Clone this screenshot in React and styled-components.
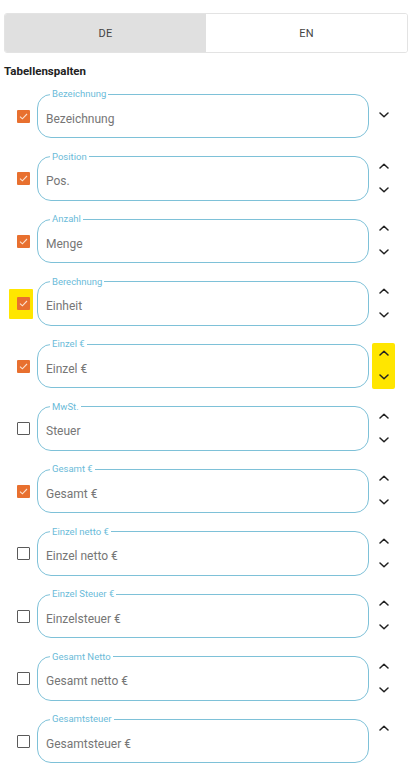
import React from "react";
import styled, { createGlobalStyle } from "styled-components";

const Global = createGlobalStyle`
  html, body { margin: 0; padding: 0; background: #fff; }
  body { font-family: Roboto, "Noto Sans", Arial, sans-serif; }
`;

const Page = styled.div`
  width: 414px;
  padding: 13px 6px 0 4px;
  box-sizing: border-box;
`;

const Toggle = styled.div`
  display: grid;
  grid-template-columns: 1fr 1fr;
  height: 40px;
  border: 1px solid #e3e3e3;
  border-radius: 3px;
  overflow: hidden;
  box-sizing: border-box;
`;

const ToggleBtn = styled.button`
  border: none;
  margin: 0;
  background: ${(p) => (p.$active ? "#e0e0e0" : "#fff")};
  font-family: Roboto, Arial, sans-serif;
  font-size: 11px;
  font-weight: 400;
  color: #444;
  letter-spacing: 0.2px;
  padding: 0;
`;

const Heading = styled.div`
  font-size: 11.5px;
  font-weight: 700;
  color: #222;
  margin: 11px 0 0 0;
  line-height: 14px;
`;

const List = styled.div`
  display: flex;
  flex-direction: column;
  gap: 13.5px;
  margin-top: 11px;
`;

const Row = styled.div`
  display: grid;
  grid-template-columns: 33px 332px 1fr;
  align-items: end;
  height: 49px;
`;

const CheckCell = styled.div`
  display: flex;
  align-items: center;
  justify-content: center;
  height: 44px;
  padding-left: 5px;
  box-sizing: border-box;
`;

const Highlight = styled.div`
  display: flex;
  align-items: center;
  justify-content: center;
  background: ${(p) => (p.$on ? "#ffe600" : "transparent")};
  width: ${(p) => p.$w}px;
  height: ${(p) => p.$h}px;
  margin-left: ${(p) => (p.$on ? "-4px" : "0")};
  padding-left: ${(p) => (p.$on ? "4px" : "0")};
  box-sizing: content-box;
  border-radius: ${(p) => (p.$on ? "1px" : "0")};
`;

const Box = styled.span`
  width: 13px;
  height: 13px;
  box-sizing: border-box;
  border-radius: 1px;
  display: flex;
  align-items: center;
  justify-content: center;
  background: ${(p) => (p.$checked ? "#e8702f" : "#fff")};
  border: ${(p) => (p.$checked ? "none" : "1px solid #5a5a5a")};
`;

const Field = styled.fieldset`
  margin: 0;
  height: 49px;
  box-sizing: border-box;
  border: 1px solid #7ec1d8;
  border-radius: 14px;
  padding: 0 9px 0 8px;
  display: flex;
  align-items: center;
  min-width: 0;
`;

const Legend = styled.legend`
  font-size: 9.5px;
  line-height: 10px;
  color: #6bbbd9;
  padding: 0 2px;
  margin-left: 4px;
`;

const Value = styled.div`
  font-size: 12px;
  color: #767676;
  margin-top: 1px;
`;

const ArrowCell = styled.div`
  height: 44px;
  display: flex;
  justify-content: center;
  align-items: center;
  padding-right: 12px;
  padding-left: 2px;
`;

const ArrowStack = styled.div`
  display: flex;
  flex-direction: column;
  align-items: center;
  justify-content: ${(p) => (p.$single ? "center" : "space-between")};
  width: 23px;
  height: ${(p) => (p.$single ? "44px" : "46px")};
  padding: 6px 0 8px;
  box-sizing: border-box;
  background: ${(p) => (p.$on ? "#ffe600" : "transparent")};
  border-radius: 2px;
`;

const Slot = styled.span`
  height: 8px;
  display: flex;
  align-items: center;
  visibility: ${(p) => (p.$hidden ? "hidden" : "visible")};
`;

const Chevron = ({ up }) => (
  <svg width="10" height="6" viewBox="0 0 10 6">
    <path
      d={up ? "M1 5 L5 1.2 L9 5" : "M1 1 L5 4.8 L9 1"}
      fill="none"
      stroke="#222"
      strokeWidth="1.5"
      strokeLinecap="round"
      strokeLinejoin="round"
    />
  </svg>
);

const Tick = () => (
  <svg width="9" height="7" viewBox="0 0 9 7">
    <path d="M1 3.6 L3.4 5.8 L8 1" fill="none" stroke="#fbe3d2" strokeWidth="1.1" />
  </svg>
);

const rows = [
  { label: "Bezeichnung", value: "Bezeichnung", checked: true, up: false, down: true },
  { label: "Position", value: "Pos.", checked: true, up: true, down: true },
  { label: "Anzahl", value: "Menge", checked: true, up: true, down: true },
  { label: "Berechnung", value: "Einheit", checked: true, up: true, down: true, hiCheck: true },
  { label: "Einzel €", value: "Einzel €", checked: true, up: true, down: true, hiArrows: true },
  { label: "MwSt.", value: "Steuer", checked: false, up: true, down: true },
  { label: "Gesamt €", value: "Gesamt €", checked: true, up: true, down: true },
  { label: "Einzel netto €", value: "Einzel netto €", checked: false, up: true, down: true },
  { label: "Einzel Steuer €", value: "Einzelsteuer €", checked: false, up: true, down: true },
  { label: "Gesamt Netto", value: "Gesamt netto €", checked: false, up: true, down: true },
  { label: "Gesamtsteuer", value: "Gesamtsteuer €", checked: false, up: true, down: false },
];

export default function App() {
  return (
    <Page>
      <Global />
      <Toggle>
        <ToggleBtn $active>DE</ToggleBtn>
        <ToggleBtn>EN</ToggleBtn>
      </Toggle>
      <Heading>Tabellenspalten</Heading>
      <List>
        {rows.map((r) => {
          const single = !r.up && r.down;
          return (
            <Row key={r.label}>
              <CheckCell>
                <Highlight $on={r.hiCheck} $w={20} $h={30}>
                  <Box $checked={r.checked}>{r.checked && <Tick />}</Box>
                </Highlight>
              </CheckCell>
              <Field>
                <Legend>{r.label}</Legend>
                <Value>{r.value}</Value>
              </Field>
              <ArrowCell>
                <ArrowStack $on={r.hiArrows} $single={single}>
                  {single ? (
                    <Slot>
                      <Chevron />
                    </Slot>
                  ) : (
                    <>
                      <Slot $hidden={!r.up}>
                        <Chevron up />
                      </Slot>
                      <Slot $hidden={!r.down}>
                        <Chevron />
                      </Slot>
                    </>
                  )}
                </ArrowStack>
              </ArrowCell>
            </Row>
          );
        })}
      </List>
    </Page>
  );
}
